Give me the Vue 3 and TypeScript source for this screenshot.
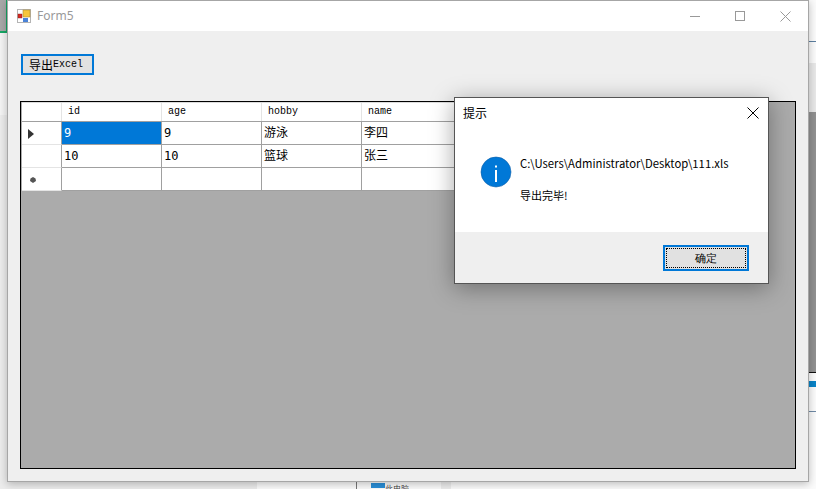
<script setup lang="ts">
const columns = ['id', 'age', 'hobby', 'name']
const rows = [
  { marker: 'current', cells: ['9', '9', '游泳', '李四'] },
  { marker: '', cells: ['10', '10', '篮球', '张三'] },
  { marker: 'new', cells: ['', '', '', ''] },
]
</script>

<template>
  <div class="desktop">
    <div class="bg bg-left-top"></div>
    <div class="bg bg-left-mid"></div>
    <div class="bg bg-right-line"></div>
    <div class="bg bg-right-band"></div>
    <div class="bg bg-right-dark"></div>
    <div class="bg bg-right-blue"></div>
    <div class="bg bg-right-line2"></div>
    <div class="bg bg-bottom-left"></div>
    <div class="bg bg-bottom-tick"></div>
    <div class="bg bg-bottom-band"></div>
    <div class="bg bg-bottom-item">
      <svg width="14" height="12" viewBox="0 0 14 12"><rect x="0" y="0" width="14" height="5" fill="#2a8fd8" /><rect x="0" y="7" width="14" height="1.500" fill="#7a8fa6" /></svg>
      <span>此电脑</span>
    </div>
    <div class="window">
      <header class="titlebar">
        <svg class="app-icon" width="15" height="15" viewBox="0 0 15 15">
          <rect x="0.5" y="0.5" width="13" height="13" fill="#fff" stroke="#b4b4b4" />
          <rect x="6" y="1" width="7" height="7" fill="#f6c63a" stroke="#b08c30" stroke-width="0.6" />
          <rect x="1" y="5" width="4" height="4" fill="#d42a22" stroke="#8a1d18" stroke-width="0.4" />
          <rect x="6" y="9" width="5" height="4" fill="#4a83d8" />
        </svg>
        <span class="title">Form5</span>
        <div class="controls">
          <svg width="11" height="11" viewBox="0 0 11 11"><path d="M0 5.500H10" stroke="#999" fill="none" /></svg>
          <svg width="11" height="11" viewBox="0 0 11 11"><rect x="0.500" y="0.500" width="9" height="9" stroke="#999" fill="none" /></svg>
          <svg width="11" height="11" viewBox="0 0 11 11"><path d="M0.500 0.500L10.500 10.500M10.500 0.500L0.500 10.500" stroke="#999" fill="none" /></svg>
        </div>
      </header>
      <main class="client">
        <button class="export"><span class="cjk">导出</span><span class="mono">Excel</span></button>
        <div class="grid">
          <div class="table">
            <div class="head">
              <div class="corner"></div>
              <div v-for="c in columns" :key="c" class="col">{{ c }}</div>
            </div>
            <div v-for="(r, i) in rows" :key="i" class="row">
              <div class="rowhead">
                <svg v-if="r.marker === 'current'" class="arrow" width="7" height="10" viewBox="0 0 7 10"><path d="M0 0L6 5L0 10Z" fill="#333" /></svg>
                <svg v-else-if="r.marker === 'new'" class="star" width="6" height="6" viewBox="0 0 6 6"><path d="M3 0L5.500 1.500L6 4L3 6L0 4L0.500 1.500Z" fill="#555" /></svg>
              </div>
              <div v-for="(cell, j) in r.cells" :key="j" class="cell" :class="{ selected: i === 0 && j === 0 }">{{ cell }}</div>
            </div>
          </div>
        </div>
      </main>
    </div>
    <div class="dialog">
      <div class="dialog-head">
        <span>提示</span>
        <svg width="12" height="12" viewBox="0 0 12 12"><path d="M0.500 0.500L11.500 11.500M11.500 0.500L0.500 11.500" stroke="#000" fill="none" /></svg>
      </div>
      <div class="dialog-body">
        <svg class="info" width="32" height="32" viewBox="0 0 32 32">
          <circle cx="16" cy="16" r="15" fill="#0078d7" stroke="#0b5ea8" stroke-width="0.6" />
          <rect x="15" y="14" width="2" height="12" fill="#fff" />
          <rect x="15" y="9.500" width="2" height="2" fill="#fff" />
        </svg>
        <div class="message">
          <div class="path">C:\Users\Administrator\Desktop\111.xls</div>
          <div class="done">导出完毕!</div>
        </div>
      </div>
      <div class="dialog-foot">
        <button class="ok"><span class="ok-inner">确定</span></button>
      </div>
    </div>
  </div>
</template>

<style>
html, body { margin: 0; padding: 0; overflow: hidden; }
</style>

<style scoped>
.desktop {
  position: relative;
  width: 816px;
  height: 489px;
  overflow: hidden;
  background: #fbfbfb;
  font-family: "Noto Sans CJK SC", "Liberation Sans", sans-serif;
}
.bg { position: absolute; }
.bg-left-top {
  left: 0;
  top: 0;
  width: 7px;
  height: 33px;
  box-sizing: border-box;
  background: #a8a8a8;
  border-right: 1px solid #16a765;
  border-bottom: 2px solid #16a765;
}
.bg-left-mid { left: 0; top: 33px; width: 7px; height: 449px; background: linear-gradient(#f4f4f4 0 82px, #ececec 82px); }
.bg-right-line { right: 0; top: 41px; width: 8px; height: 1px; background: #5c7fa0; }
.bg-right-band { right: 0; top: 63px; width: 8px; height: 49px; background: #e8e8e8; }
.bg-right-dark { right: 0; top: 112px; width: 8px; height: 261px; background: #919191; border-bottom: 1px solid #111; box-sizing: border-box; }
.bg-right-blue { right: 0; top: 381px; width: 8px; height: 6px; background: #0a84c8; }
.bg-right-line2 { right: 0; top: 411px; width: 8px; height: 1px; background: #6f8aa5; }
.bg-bottom-left { left: 0; top: 482px; width: 257px; height: 7px; background: #ececec; }
.bg-bottom-tick { left: 356px; top: 482px; width: 1px; height: 7px; background: #777; }
.bg-bottom-band { left: 441px; top: 482px; width: 10px; height: 7px; background: #ededed; }
.bg-bottom-item {
  left: 371px;
  top: 478px;
  display: flex;
  gap: 0;
  align-items: flex-end;
  font-size: 8px;
  line-height: 11px;
  color: #444;
}
.bg-bottom-item svg { margin-bottom: -1px; margin-top: 5px; }
.window {
  position: absolute;
  left: 7px;
  top: 0;
  width: 802px;
  height: 482px;
  box-sizing: border-box;
  border: 1px solid #a6a6a6;
  display: flex;
  flex-direction: column;
  background: #efefef;
  box-shadow: 0 2px 8px rgba(0, 0, 0, 0.25);
}
.titlebar {
  height: 30px;
  background: #fff;
  display: flex;
  align-items: center;
  padding-left: 9px;
  flex: none;
}
.app-icon { flex: none; }
.title {
  margin-left: 5px;
  margin-bottom: 2px;
  font: 12px "Noto Sans", sans-serif;
  color: #999;
}
.controls {
  margin-left: auto;
  display: flex;
  gap: 34px;
  padding-right: 17px;
}
.client {
  flex: 1;
  padding: 23px 11px 12px 12px;
  display: flex;
  flex-direction: column;
  align-items: flex-start;
  min-height: 0;
}
.export {
  margin-left: 1px;
  width: 73px;
  height: 21px;
  padding: 0 0 0 6px;
  box-sizing: border-box;
  border: 2px solid #0078d7;
  background: #e1e1e1;
  color: #000;
  display: flex;
  align-items: center;
}
.cjk { font: 12px/14px "Noto Sans CJK SC", sans-serif; }
.mono { font: 10px/14px "Liberation Mono", monospace; }
.grid {
  margin-top: 26px;
  flex: 1;
  width: 776px;
  box-sizing: border-box;
  border: 1px solid #000;
  background: #ababab;
  padding-left: 1px;
  overflow: hidden;
}
.table {
  width: fit-content;
  border-top: 1px solid #dcdcdc;
}
.head, .row { display: flex; }
.head { height: 19px; background: #fff; border-bottom: 1px solid #a0a0a0; box-sizing: border-box; }
.corner { width: 40px; border-right: 1px solid #e4e4e4; box-sizing: border-box; flex: none; }
.col {
  width: 100px;
  padding-left: 6px;
  box-sizing: border-box;
  flex: none;
  border-right: 1px solid #e4e4e4;
  font: 10px/18px "Liberation Mono", monospace;
  color: #000;
}
.row { height: 23px; }
.rowhead {
  width: 40px;
  flex: none;
  box-sizing: border-box;
  background: #fff;
  border-right: 1px solid #a0a0a0;
  border-bottom: 1px solid #e4e4e4;
  display: flex;
  align-items: center;
  padding-left: 6px;
}
.arrow { margin-top: 2px; }
.star { margin-left: 2px; margin-top: 2px; }
.cell {
  width: 100px;
  flex: none;
  box-sizing: border-box;
  background: #fff;
  border-right: 1px solid #a0a0a0;
  border-bottom: 1px solid #a0a0a0;
  padding-left: 2px;
  font: 12px/22px "DejaVu Sans Mono", "Noto Sans CJK SC", monospace;
  color: #000;
}
.cell.selected { background: #0078d7; color: #fff; }
.dialog {
  position: absolute;
  left: 454px;
  top: 97px;
  width: 315px;
  height: 187px;
  box-sizing: border-box;
  border: 1px solid #555;
  background: #fff;
  box-shadow: 0 4px 22px rgba(0, 0, 0, 0.35);
  display: flex;
  flex-direction: column;
}
.dialog-head {
  height: 29px;
  display: flex;
  align-items: center;
  justify-content: space-between;
  padding: 0 9px 0 8px;
  font-size: 12px;
  color: #000;
  flex: none;
}
.dialog-body {
  flex: 1;
  display: flex;
  padding: 29px 0 0 25px;
  gap: 8px;
  align-items: flex-start;
}
.info { flex: none; }
.message { margin-top: -1px; font: 11px/16px "Noto Sans CJK SC", "Liberation Sans", sans-serif; color: #000; }
.path { font-size: 11.3px; }
.done { margin-top: 16px; }
.dialog-foot {
  height: 51px;
  background: #efefef;
  display: flex;
  align-items: flex-start;
  justify-content: flex-end;
  padding: 13px 19px 0 0;
  box-sizing: border-box;
  flex: none;
}
.ok {
  width: 86px;
  height: 26px;
  padding: 1px;
  box-sizing: border-box;
  border: 2px solid #0078d7;
  background: #e1e1e1;
}
.ok-inner {
  display: flex;
  align-items: center;
  justify-content: center;
  height: 100%;
  box-sizing: border-box;
  border: 1px dotted #000;
  font-size: 11px;
  color: #000;
}
</style>
